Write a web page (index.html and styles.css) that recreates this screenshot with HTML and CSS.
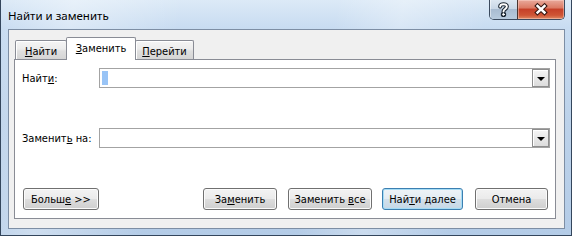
FILE: index.html
```html
<!DOCTYPE html>
<html lang="ru">
<head>
<meta charset="utf-8">
<title>Найти и заменить</title>
<link rel="stylesheet" href="styles.css">
</head>
<body>
<div class="window">
  <div class="titlebar">
    <span class="title">Найти и заменить</span>
    <div class="caption">
      <div class="cap help">
        <svg width="28" height="19" viewBox="0 0 28 19">
          <g fill="none" stroke-linecap="round" stroke-linejoin="round">
            <path d="M10.5 6.5 C10.5 3.2 17.5 3.2 17.5 6.5 C17.5 9 14 9 14 11.5" stroke="#1c2733" stroke-width="4.2"/>
            <circle cx="14" cy="14.6" r="1.2" stroke="#1c2733" stroke-width="3.2"/>
            <path d="M10.5 6.5 C10.5 3.2 17.5 3.2 17.5 6.5 C17.5 9 14 9 14 11.5" stroke="#fff" stroke-width="2"/>
            <circle cx="14" cy="14.6" r="0.9" fill="#fff" stroke="#fff" stroke-width="1"/>
          </g>
        </svg>
      </div>
      <div class="cap close">
        <svg width="46" height="19" viewBox="0 0 46 19">
          <g fill="none" stroke-linecap="square">
            <path d="M19.5 6 L26.5 12.5 M26.5 6 L19.5 12.5" stroke="#3a1a14" stroke-width="4.6"/>
            <path d="M19.5 6 L26.5 12.5 M26.5 6 L19.5 12.5" stroke="#fff" stroke-width="2.4"/>
          </g>
        </svg>
      </div>
    </div>
  </div>
  <div class="client">
    <div class="tabs">
      <div class="tab t1"><u>Н</u>айти</div>
      <div class="tab t2 active"><u>З</u>аменить</div>
      <div class="tab t3"><u>П</u>ерейти</div>
    </div>
    <div class="panel">
      <div class="row">
        <label class="label">Найт<u>и</u>:</label>
        <div class="combo">
          <span class="sel"></span>
          <span class="drop"><span class="arrow"></span></span>
        </div>
      </div>
      <div class="row gap">
        <label class="label">Заменит<u>ь</u> на:</label>
        <div class="combo">
          <span class="drop"><span class="arrow"></span></span>
        </div>
      </div>
      <div class="buttons">
        <button class="btn more">Больш<u>е</u> &gt;&gt;</button>
        <button class="btn replace">За<u>м</u>енить</button>
        <button class="btn replace-all">Заменить <u>в</u>се</button>
        <button class="btn default next">Най<u>т</u>и далее</button>
        <button class="btn cancel">Отмена</button>
      </div>
    </div>
  </div>
</div>
</body>
</html>
```
FILE: styles.css
```css
html, body {
  margin: 0;
  padding: 0;
}
body {
  width: 572px;
  height: 236px;
  overflow: hidden;
  background: #c2d7ee;
}
.window {
  box-sizing: border-box;
  width: 572px;
  height: 236px;
  border: 1px solid #34465c;
  border-top: none;
  background:
    linear-gradient(100deg, rgba(255,255,255,0) 0, rgba(255,255,255,0.35) 12%, rgba(255,255,255,0) 30%, rgba(255,255,255,0) 55%, rgba(255,255,255,0.3) 66%, rgba(255,255,255,0) 80%),
    linear-gradient(180deg, #dceaf7 0, #c8dcf1 28px, #bcd2ea 120px, #b4cce7 100%);
  font-family: "DejaVu Sans Condensed", "DejaVu Sans", sans-serif;
  font-stretch: semi-condensed;
  font-size: 11px;
  color: #000;
}
.titlebar {
  height: 29px;
  display: flex;
  align-items: center;
  justify-content: space-between;
}
.title {
  padding-left: 7px;
  font-family: "Noto Sans", "Open Sans", sans-serif;
  font-stretch: normal;
  font-size: 11.5px;
  color: #000;
  padding-top: 1px;
}
.caption {
  align-self: flex-start;
  display: flex;
  margin-right: 6px;
  height: 20px;
  box-sizing: border-box;
  border: 1px solid #3b4a5e;
  border-top: none;
  border-radius: 0 0 5px 5px;
  overflow: hidden;
}
.cap {
  height: 19px;
  display: flex;
}
.cap svg { display: block; }
.help {
  width: 28px;
  background: linear-gradient(180deg, #dde7f1 0, #c9d7e6 45%, #a9bcd1 50%, #b7cadd 100%);
  border-right: 1px solid #4b3530;
  box-sizing: border-box;
  box-shadow: inset 1px 0 0 rgba(255,255,255,0.5);
}
.close {
  width: 46px;
  background: linear-gradient(180deg, #e9a99b 0, #dc7c66 40%, #c64129 50%, #cf5535 80%, #de8a64 100%);
  box-shadow: inset 0 0 0 1px rgba(255,220,210,0.45);
}
.client {
  box-sizing: border-box;
  margin-left: 7px;
  width: 557px;
  height: 200px;
  border: 1px solid #7d8ea4;
  background: #f0f0f0;
  padding: 7px 0 0 5px;
}
.tabs {
  display: flex;
  align-items: flex-end;
  height: 22px;
  margin-left: 1px;
  position: relative;
  z-index: 1;
}
.tab {
  box-sizing: border-box;
  height: 19px;
  border: 1px solid #898c95;
  border-bottom: none;
  border-radius: 2px 2px 0 0;
  background: linear-gradient(180deg, #f5f5f5 0, #ececec 45%, #dfdfdf 55%, #d5d5d5 100%);
  box-shadow: inset 1px 1px 0 #fff;
  display: flex;
  align-items: center;
  justify-content: center;
  padding-top: 2px;
}
.t1 { width: 52px; }
.t2 { width: 70px; margin-left: -1px; }
.t3 { width: 59px; margin-left: -1px; }
.tab.active {
  height: 23px;
  margin-bottom: -1px;
  background: #fff;
  box-shadow: none;
  position: relative;
  z-index: 2;
  padding-top: 0;
  padding-bottom: 1px;
}
.panel {
  box-sizing: border-box;
  width: 542px;
  height: 160px;
  border: 1px solid #898c95;
  background: #fff;
  padding: 8px 5px 8px 7px;
}
.row {
  display: flex;
  align-items: center;
  height: 20px;
}
.row.gap { margin-top: 40px; }
.label {
  width: 77px;
  flex: none;
}
.combo {
  box-sizing: border-box;
  width: 451px;
  height: 20px;
  border: 1px solid #a3a3a3;
  background: #fff;
  display: flex;
  align-items: flex-start;
  justify-content: space-between;
}
.sel {
  width: 6px;
  height: 14px;
  margin: 2px 0 0 2px;
  background: #99c4f6;
}
.drop {
  box-sizing: border-box;
  width: 17px;
  height: 18px;
  margin-left: auto;
  border: 1px solid #8e8e8e;
  background: linear-gradient(180deg, #f6f6f6 0, #e8e8e8 50%, #dcdcdc 100%);
  box-shadow: inset 1px 1px 0 #fff;
  display: flex;
  align-items: center;
  justify-content: center;
}
.arrow {
  width: 0;
  height: 0;
  border-left: 4px solid transparent;
  border-right: 4px solid transparent;
  border-top: 4px solid #000;
  margin-top: 1px;
}
.buttons {
  display: flex;
  margin-top: 40px;
  height: 22px;
  padding-left: 1px;
}
.btn {
  box-sizing: border-box;
  height: 22px;
  padding: 0;
  margin: 0;
  border: 1px solid #707070;
  border-radius: 3px;
  background: linear-gradient(180deg, #f3f3f3 0, #ebebeb 48%, #dddddd 52%, #cfcfcf 100%);
  box-shadow: inset 0 0 0 1px #fbfbfb;
  font: inherit;
  color: #000;
  text-align: center;
}
.more { width: 76px; text-align: left; padding-left: 7px; }
.replace { width: 74px; margin-left: auto; }
.replace-all { width: 84px; margin-left: 11px; }
.next { width: 81px; margin-left: 10px; }
.cancel { width: 73px; margin-left: 12px; margin-right: 2px; }
.btn.default {
  border-color: #3c7fb1;
  background: linear-gradient(180deg, #eef3f7 0, #e3ecf3 48%, #d2e0eb 52%, #c6d8e6 100%);
  box-shadow: inset 0 0 0 1px #a5dcf5;
}
u { text-decoration: underline; text-underline-offset: 1px; }
```
